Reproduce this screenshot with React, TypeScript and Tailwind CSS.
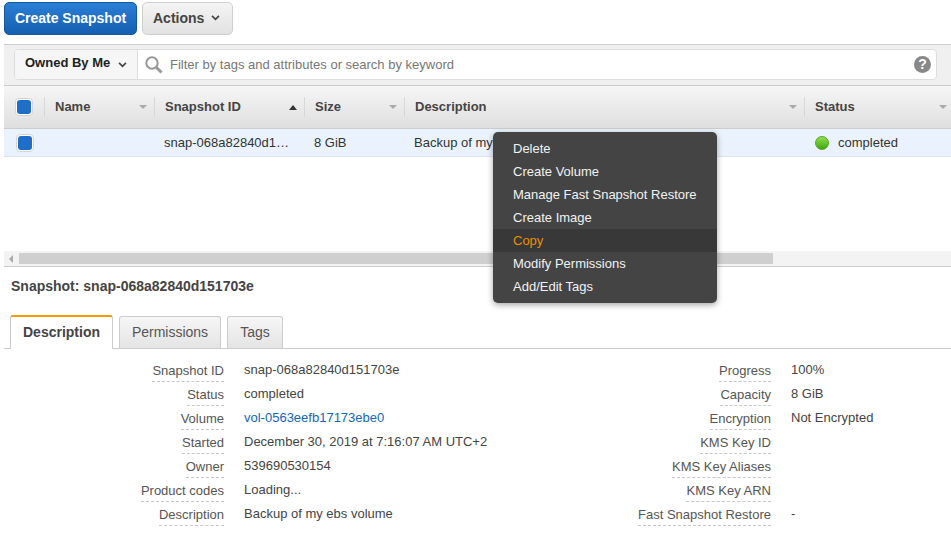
const columns = [
  { label: "Name", width: "w-[110px]", sort: "down" },
  { label: "Snapshot ID", width: "w-[150px]", sort: "up" },
  { label: "Size", width: "w-[100px]", sort: "down" },
  { label: "Description", width: "w-[400px]", sort: "down" },
  { label: "Status", width: "w-[146px]", sort: "down" },
];

const menuItems = [
  "Delete",
  "Create Volume",
  "Manage Fast Snapshot Restore",
  "Create Image",
  "Copy",
  "Modify Permissions",
  "Add/Edit Tags",
];

const leftDetails = [
  { label: "Snapshot ID", value: "snap-068a82840d151703e" },
  { label: "Status", value: "completed" },
  { label: "Volume", value: "vol-0563eefb17173ebe0", link: true },
  { label: "Started", value: "December 30, 2019 at 7:16:07 AM UTC+2" },
  { label: "Owner", value: "539690530154" },
  { label: "Product codes", value: "Loading..." },
  { label: "Description", value: "Backup of my ebs volume" },
];

const rightDetails = [
  { label: "Progress", value: "100%" },
  { label: "Capacity", value: "8 GiB" },
  { label: "Encryption", value: "Not Encrypted" },
  { label: "KMS Key ID", value: "" },
  { label: "KMS Key Aliases", value: "" },
  { label: "KMS Key ARN", value: "" },
  { label: "Fast Snapshot Restore", value: "-" },
];

const Caret = ({ className }: { className: string }) => (
  <svg viewBox="0 0 10 7" className={className} fill="none" stroke="currentColor" strokeWidth="2">
    <path d="M1 1 L5 5 L9 1" />
  </svg>
);

const SearchGlyph = () => (
  <svg viewBox="0 0 18 18" className="w-[18px] h-[18px] ml-[7px] mt-[6px] text-[#999]" fill="none" stroke="currentColor">
    <circle cx="7" cy="7" r="5.7" strokeWidth="2" />
    <path d="M11.2 11.2 L16.5 16.5" strokeWidth="3" />
  </svg>
);

const Checkbox = () => (
  <div className="w-[18px] h-[18px] rounded-[4px] bg-white border border-[#d5d5d5] flex items-center justify-center">
    <div className="w-[14px] h-[14px] rounded-[3px] bg-[#1f6fc9]" />
  </div>
);

const DetailRow = ({ label, value, link }: { label: string; value: string; link?: boolean }) => (
  <div className="flex h-[24px]">
    <div className="w-[224px] flex justify-end">
      <span className="h-[20px] pt-[1px] leading-[16px] text-[#555] border-b border-dashed border-[#c8c8c8]">{label}</span>
    </div>
    <div className={`ml-[20px] leading-[16px] ${link ? "text-[#1166bb]" : "text-[#444]"}`}>{value}</div>
  </div>
);

export default function App() {
  return (
    <div className="relative w-[951px] h-[549px] overflow-hidden bg-white text-[13px] font-['Liberation_Sans',Arial,sans-serif]">
      <div className="h-[44px] pl-[4px] pt-[2px] flex items-start gap-[5px]">
        <button className="w-[133px] h-[33px] rounded-[5px] border border-[#15589f] bg-gradient-to-b from-[#2a7fd6] to-[#145fb1] text-white font-bold text-[14px]">
          Create Snapshot
        </button>
        <button className="w-[91px] h-[33px] rounded-[5px] border border-[#cfcfcf] bg-gradient-to-b from-[#f4f4f4] to-[#e2e2e2] text-[#444] font-bold text-[14px] flex items-center pl-[10px] gap-[7px]">
          Actions
          <Caret className="w-[9px] h-[6px] mb-[2px]" />
        </button>
      </div>

      <div className="ml-[4px] h-[42px] bg-[#f0f0f0] border-t border-b border-[#cccccc] pl-[10px] pr-[14px] pt-[4px]">
        <div className="h-[31px] flex rounded-[4px] border border-[#dddddd] bg-white overflow-hidden">
          <div className="w-[123px] bg-[#f6f6f6] border-r border-[#dddddd] flex items-center pl-[10px] pb-[3px] font-bold text-[#222]">
            Owned By Me
            <Caret className="w-[9px] h-[6px] ml-[8px] mt-[3px] text-[#444]" />
          </div>
          <SearchGlyph />
          <div className="ml-[7px] leading-[30px] text-[#777] flex-1">Filter by tags and attributes or search by keyword</div>
          <div className="w-[17px] h-[17px] mt-[6px] mr-[5px] rounded-full bg-[#888] text-white font-bold text-[14px] leading-[17px] text-center">?</div>
        </div>
      </div>

      <div className="ml-[4px] h-[43px] flex items-center bg-gradient-to-b from-[#f6f6f6] to-[#dfdfdf] border-b border-[#cccccc]">
        <div className="w-[41px] pl-[11px] flex items-center h-[20px] border-r border-[#d8d8d8]">
          <Checkbox />
        </div>
        {columns.map((col) => (
          <div key={col.label} className={`${col.width} h-[20px] flex items-center justify-between pl-[10px] pr-[7px] last:pr-[4px] border-r border-[#d8d8d8] last:border-r-0 font-bold text-[#444]`}>
            {col.label}
            {col.sort === "up" ? (
              <div className="w-0 h-0 border-x-[4px] border-x-transparent border-b-[5px] border-b-[#333]" />
            ) : (
              <div className="w-0 h-0 border-x-[4px] border-x-transparent border-t-[4px] border-t-[#aaa]" />
            )}
          </div>
        ))}
      </div>

      <div className="ml-[4px] h-[28px] flex items-center bg-[#eaf3fd] border-b border-[#dde3ea] text-[#333]">
        <div className="w-[40px] pl-[12px]">
          <Checkbox />
        </div>
        <div className="w-[110px]" />
        <div className="w-[150px] pl-[10px]">snap-068a82840d1…</div>
        <div className="w-[100px] pl-[10px]">8 GiB</div>
        <div className="w-[399px] pl-[10px]">Backup of my ebs volume</div>
        <div className="pl-[12px] flex items-center gap-[9px]">
          <div className="w-[14px] h-[14px] rounded-full bg-gradient-to-b from-[#8ee04a] to-[#3ea50e] border border-[#52a52a]" />
          completed
        </div>
      </div>

      <div className="h-[94px]" />

      <div className="ml-[4px] h-[16px] bg-[#f3f3f3] border-b border-[#cccccc] flex">
        <div className="w-[15px] flex items-center pl-[5px]">
          <div className="w-0 h-0 border-y-[4px] border-y-transparent border-r-[4px] border-r-[#aaa]" />
        </div>
        <div className="w-[754px] h-[11px] bg-[#cfcfcf] mt-[2px]" />
      </div>

      <div className="pl-[11px] pt-[10px] h-[49px] font-bold text-[14px] leading-[18px] text-[#444]">Snapshot: snap-068a82840d151703e</div>

      <div className="ml-[4px] h-[33px] flex items-end border-b border-[#cccccc] pl-[6px]">
        <div className="w-[103px] h-[34px] -mb-px bg-white border-x border-[#cccccc] border-t-2 border-t-[#f59b00] rounded-t-[3px] text-center leading-[30px] font-bold text-[14px] text-[#444]">
          Description
        </div>
        <div className="ml-[6px] w-[102px] h-[32px] bg-gradient-to-b from-[#f6f6f6] to-[#e4e4e4] border border-b-0 border-[#cccccc] rounded-t-[3px] text-center leading-[30px] text-[14px] text-[#555]">
          Permissions
        </div>
        <div className="ml-[6px] w-[56px] h-[32px] bg-gradient-to-b from-[#f6f6f6] to-[#e4e4e4] border border-b-0 border-[#cccccc] rounded-t-[3px] text-center leading-[30px] text-[14px] text-[#555]">
          Tags
        </div>
      </div>

      <div className="flex pt-[13px]">
        <div className="w-[547px]">
          {leftDetails.map((row) => (
            <DetailRow key={row.label} label={row.label} value={row.value} link={row.link} />
          ))}
        </div>
        <div>
          {rightDetails.map((row) => (
            <DetailRow key={row.label} label={row.label} value={row.value} />
          ))}
        </div>
      </div>

      <div className="absolute left-[493px] top-[132px] w-[224px] h-[171px] py-[5px] rounded-[5px] bg-[#444444] shadow-[0_2px_6px_rgba(0,0,0,0.35)]">
        {menuItems.map((item) => (
          <div key={item} className={`h-[23px] pl-[20px] leading-[23px] ${item === "Copy" ? "bg-[#383838] text-[#ec8f00]" : "text-[#f2f2f2]"}`}>
            {item}
          </div>
        ))}
      </div>
    </div>
  );
}
